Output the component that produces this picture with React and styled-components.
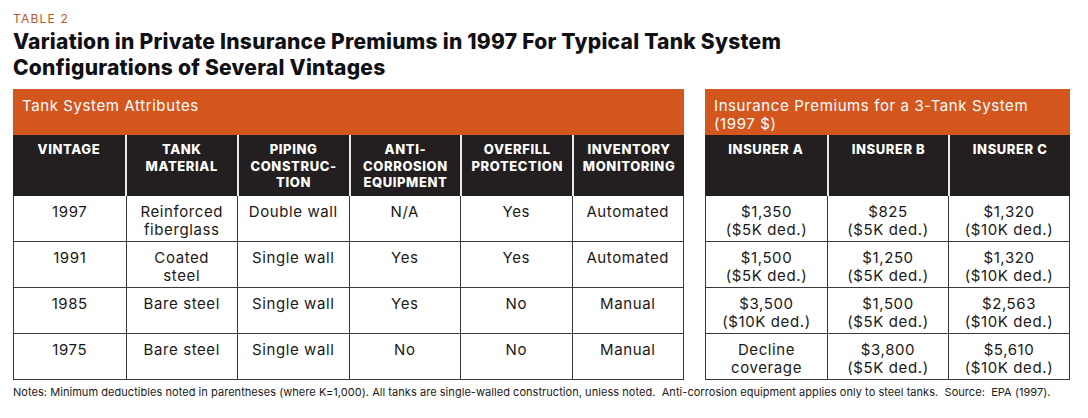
import React from 'react';
import styled, { createGlobalStyle } from 'styled-components';

const GlobalStyle = createGlobalStyle`
  html, body {
    margin: 0;
    padding: 0;
    background: #ffffff;
  }
  body {
    font-family: Inter, "Open Sans", sans-serif;
    color: #1c1a1b;
  }
`;

const attrHeaders = [
  ['VINTAGE'],
  ['TANK', 'MATERIAL'],
  ['PIPING', 'CONSTRUC-', 'TION'],
  ['ANTI-', 'CORROSION', 'EQUIPMENT'],
  ['OVERFILL', 'PROTECTION'],
  ['INVENTORY', 'MONITORING'],
];

const attrRows = [
  [['1997'], ['Reinforced', 'fiberglass'], ['Double wall'], ['N/A'], ['Yes'], ['Automated']],
  [['1991'], ['Coated', 'steel'], ['Single wall'], ['Yes'], ['Yes'], ['Automated']],
  [['1985'], ['Bare steel'], ['Single wall'], ['Yes'], ['No'], ['Manual']],
  [['1975'], ['Bare steel'], ['Single wall'], ['No'], ['No'], ['Manual']],
];

const insurerHeaders = [['INSURER A'], ['INSURER B'], ['INSURER C']];

const premiumRows = [
  [['$1,350', '($5K ded.)'], ['$825', '($5K ded.)'], ['$1,320', '($10K ded.)']],
  [['$1,500', '($5K ded.)'], ['$1,250', '($5K ded.)'], ['$1,320', '($10K ded.)']],
  [['$3,500', '($10K ded.)'], ['$1,500', '($5K ded.)'], ['$2,563', '($10K ded.)']],
  [['Decline', 'coverage'], ['$3,800', '($5K ded.)'], ['$5,610', '($10K ded.)']],
];

export default function App() {
  return (
    <Page>
      <GlobalStyle />
      <Label>TABLE 2</Label>
      <Title>
        Variation in Private Insurance Premiums in 1997 For Typical Tank System
        <br />
        Configurations of Several Vintages
      </Title>
      <Tables>
        <DataTable $width={671}>
          <Caption>Tank System Attributes</Caption>
          <HeadRow $cols={6}>
            {attrHeaders.map((h, i) => (
              <HeadCell key={i}>
                {h.map((l, j) => <div key={j}>{l}</div>)}
              </HeadCell>
            ))}
          </HeadRow>
          {attrRows.map((row, r) => (
            <BodyRow key={r} $cols={6}>
              {row.map((c, i) => (
                <Cell key={i}>
                  {c.map((l, j) => <div key={j}>{l}</div>)}
                </Cell>
              ))}
            </BodyRow>
          ))}
        </DataTable>
        <DataTable $width={365}>
          <Caption>Insurance Premiums for a 3-Tank System<br />(1997 $)</Caption>
          <HeadRow $cols={3}>
            {insurerHeaders.map((h, i) => (
              <HeadCell key={i}>
                {h.map((l, j) => <div key={j}>{l}</div>)}
              </HeadCell>
            ))}
          </HeadRow>
          {premiumRows.map((row, r) => (
            <BodyRow key={r} $cols={3}>
              {row.map((c, i) => (
                <Cell key={i}>
                  {c.map((l, j) => <div key={j}>{l}</div>)}
                </Cell>
              ))}
            </BodyRow>
          ))}
        </DataTable>
      </Tables>
      <Notes>
        Notes: Minimum deductibles noted in parentheses (where K=1,000). All tanks are single-walled construction, unless noted.&nbsp; Anti-corrosion equipment applies only to steel tanks.&nbsp; Source:&nbsp; EPA (1997).
      </Notes>
    </Page>
  );
}

const Page = styled.div`
  width: 1088px;
  height: 418px;
  padding: 12px 0 0 13px;
  box-sizing: border-box;
  overflow: hidden;
`;

const Label = styled.div`
  font-size: 12px;
  letter-spacing: 1.2px;
  color: #b4552b;
  line-height: 14px;
`;

const Title = styled.h1`
  margin: 3px 0 0;
  font-size: 21px;
  font-weight: 800;
  line-height: 25.5px;
  letter-spacing: 0.25px;
  color: #111014;
`;

const Tables = styled.div`
  display: flex;
  gap: 21px;
  margin-top: 9px;
`;

const DataTable = styled.div`
  width: ${p => p.$width}px;
  display: flex;
  flex-direction: column;
`;

const Caption = styled.div`
  height: 46px;
  background: #d4561f;
  color: #ffffff;
  font-size: 15px;
  letter-spacing: 0.6px;
  line-height: 18.2px;
  padding: 8px 9px 0;
  box-sizing: border-box;
`;

const HeadRow = styled.div`
  display: grid;
  grid-template-columns: repeat(${p => p.$cols}, 1fr);
  background: #231f20;
  height: 61px;
`;

const HeadCell = styled.div`
  color: #ffffff;
  font-size: 13px;
  font-weight: 800;
  letter-spacing: 0.6px;
  line-height: 16.5px;
  text-align: center;
  padding-top: 6px;
  & + & {
    border-left: 2px solid #e8e8e8;
  }
`;

const BodyRow = styled.div`
  display: grid;
  grid-template-columns: repeat(${p => p.$cols}, 1fr);
  height: 46px;
  border: 1.5px solid #3a3a3a;
  border-top: none;
  box-sizing: border-box;
`;

const Cell = styled.div`
  font-size: 15px;
  letter-spacing: 0.6px;
  line-height: 18.2px;
  text-align: center;
  padding-top: 7px;
  color: #1a1819;
  & + & {
    border-left: 1.5px solid #3a3a3a;
  }
`;

const Notes = styled.div`
  margin-top: 5px;
  font-size: 11px;
  letter-spacing: 0.05px;
  color: #1a1819;
`;
